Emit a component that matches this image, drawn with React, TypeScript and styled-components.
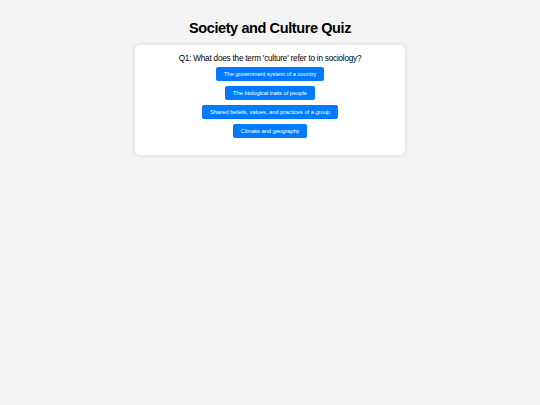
import styled, { createGlobalStyle } from 'styled-components';

const GlobalStyle = createGlobalStyle`
	html, body {
		margin: 0;
		padding: 0;
		background: #f4f4f4;
		font-family: "Liberation Sans", Arial, sans-serif;
	}
`;

const Page = styled.div`
	display: flex;
	flex-direction: column;
	align-items: center;
	padding-top: 19px;
	min-height: 405px;
	box-sizing: border-box;
`;

const Title = styled.h1`
	margin: 0 0 8px;
	font-size: 14.5px;
	letter-spacing: -0.4px;
	font-weight: 700;
	color: #000;
	line-height: 18px;
`;

const Card = styled.div`
	width: 270px;
	box-sizing: border-box;
	padding: 8px 10px 17px;
	background: #fff;
	border-radius: 5px;
	box-shadow: 0 0 5px rgb(0 0 0 / 0.12);
	display: flex;
	flex-direction: column;
	align-items: center;
`;

const Question = styled.p`
	margin: 0 0 3px;
	font-size: 8.2px;
	letter-spacing: -0.22px;
	line-height: 11px;
	color: #000;
`;

const Options = styled.div`
	display: flex;
	flex-direction: column;
	align-items: center;
	gap: 5px;
`;

const OptionButton = styled.button`
	height: 14px;
	padding: 0 8px;
	border: none;
	border-radius: 2px;
	background: #007bff;
	color: #fff;
	font-family: "Liberation Sans", Arial, sans-serif;
	font-size: 5.8px;
	letter-spacing: -0.05px;
	cursor: pointer;
`;

const options = [
	'The government system of a country',
	'The biological traits of people',
	'Shared beliefs, values, and practices of a group',
	'Climate and geography',
];

export default function App() {
	return (
		<>
			<GlobalStyle />
			<Page>
				<Title>Society and Culture Quiz</Title>
				<Card>
					<Question>Q1: What does the term 'culture' refer to in sociology?</Question>
					<Options>
						{options.map((o) => (
							<OptionButton key={o}>{o}</OptionButton>
						))}
					</Options>
				</Card>
			</Page>
		</>
	);
}
